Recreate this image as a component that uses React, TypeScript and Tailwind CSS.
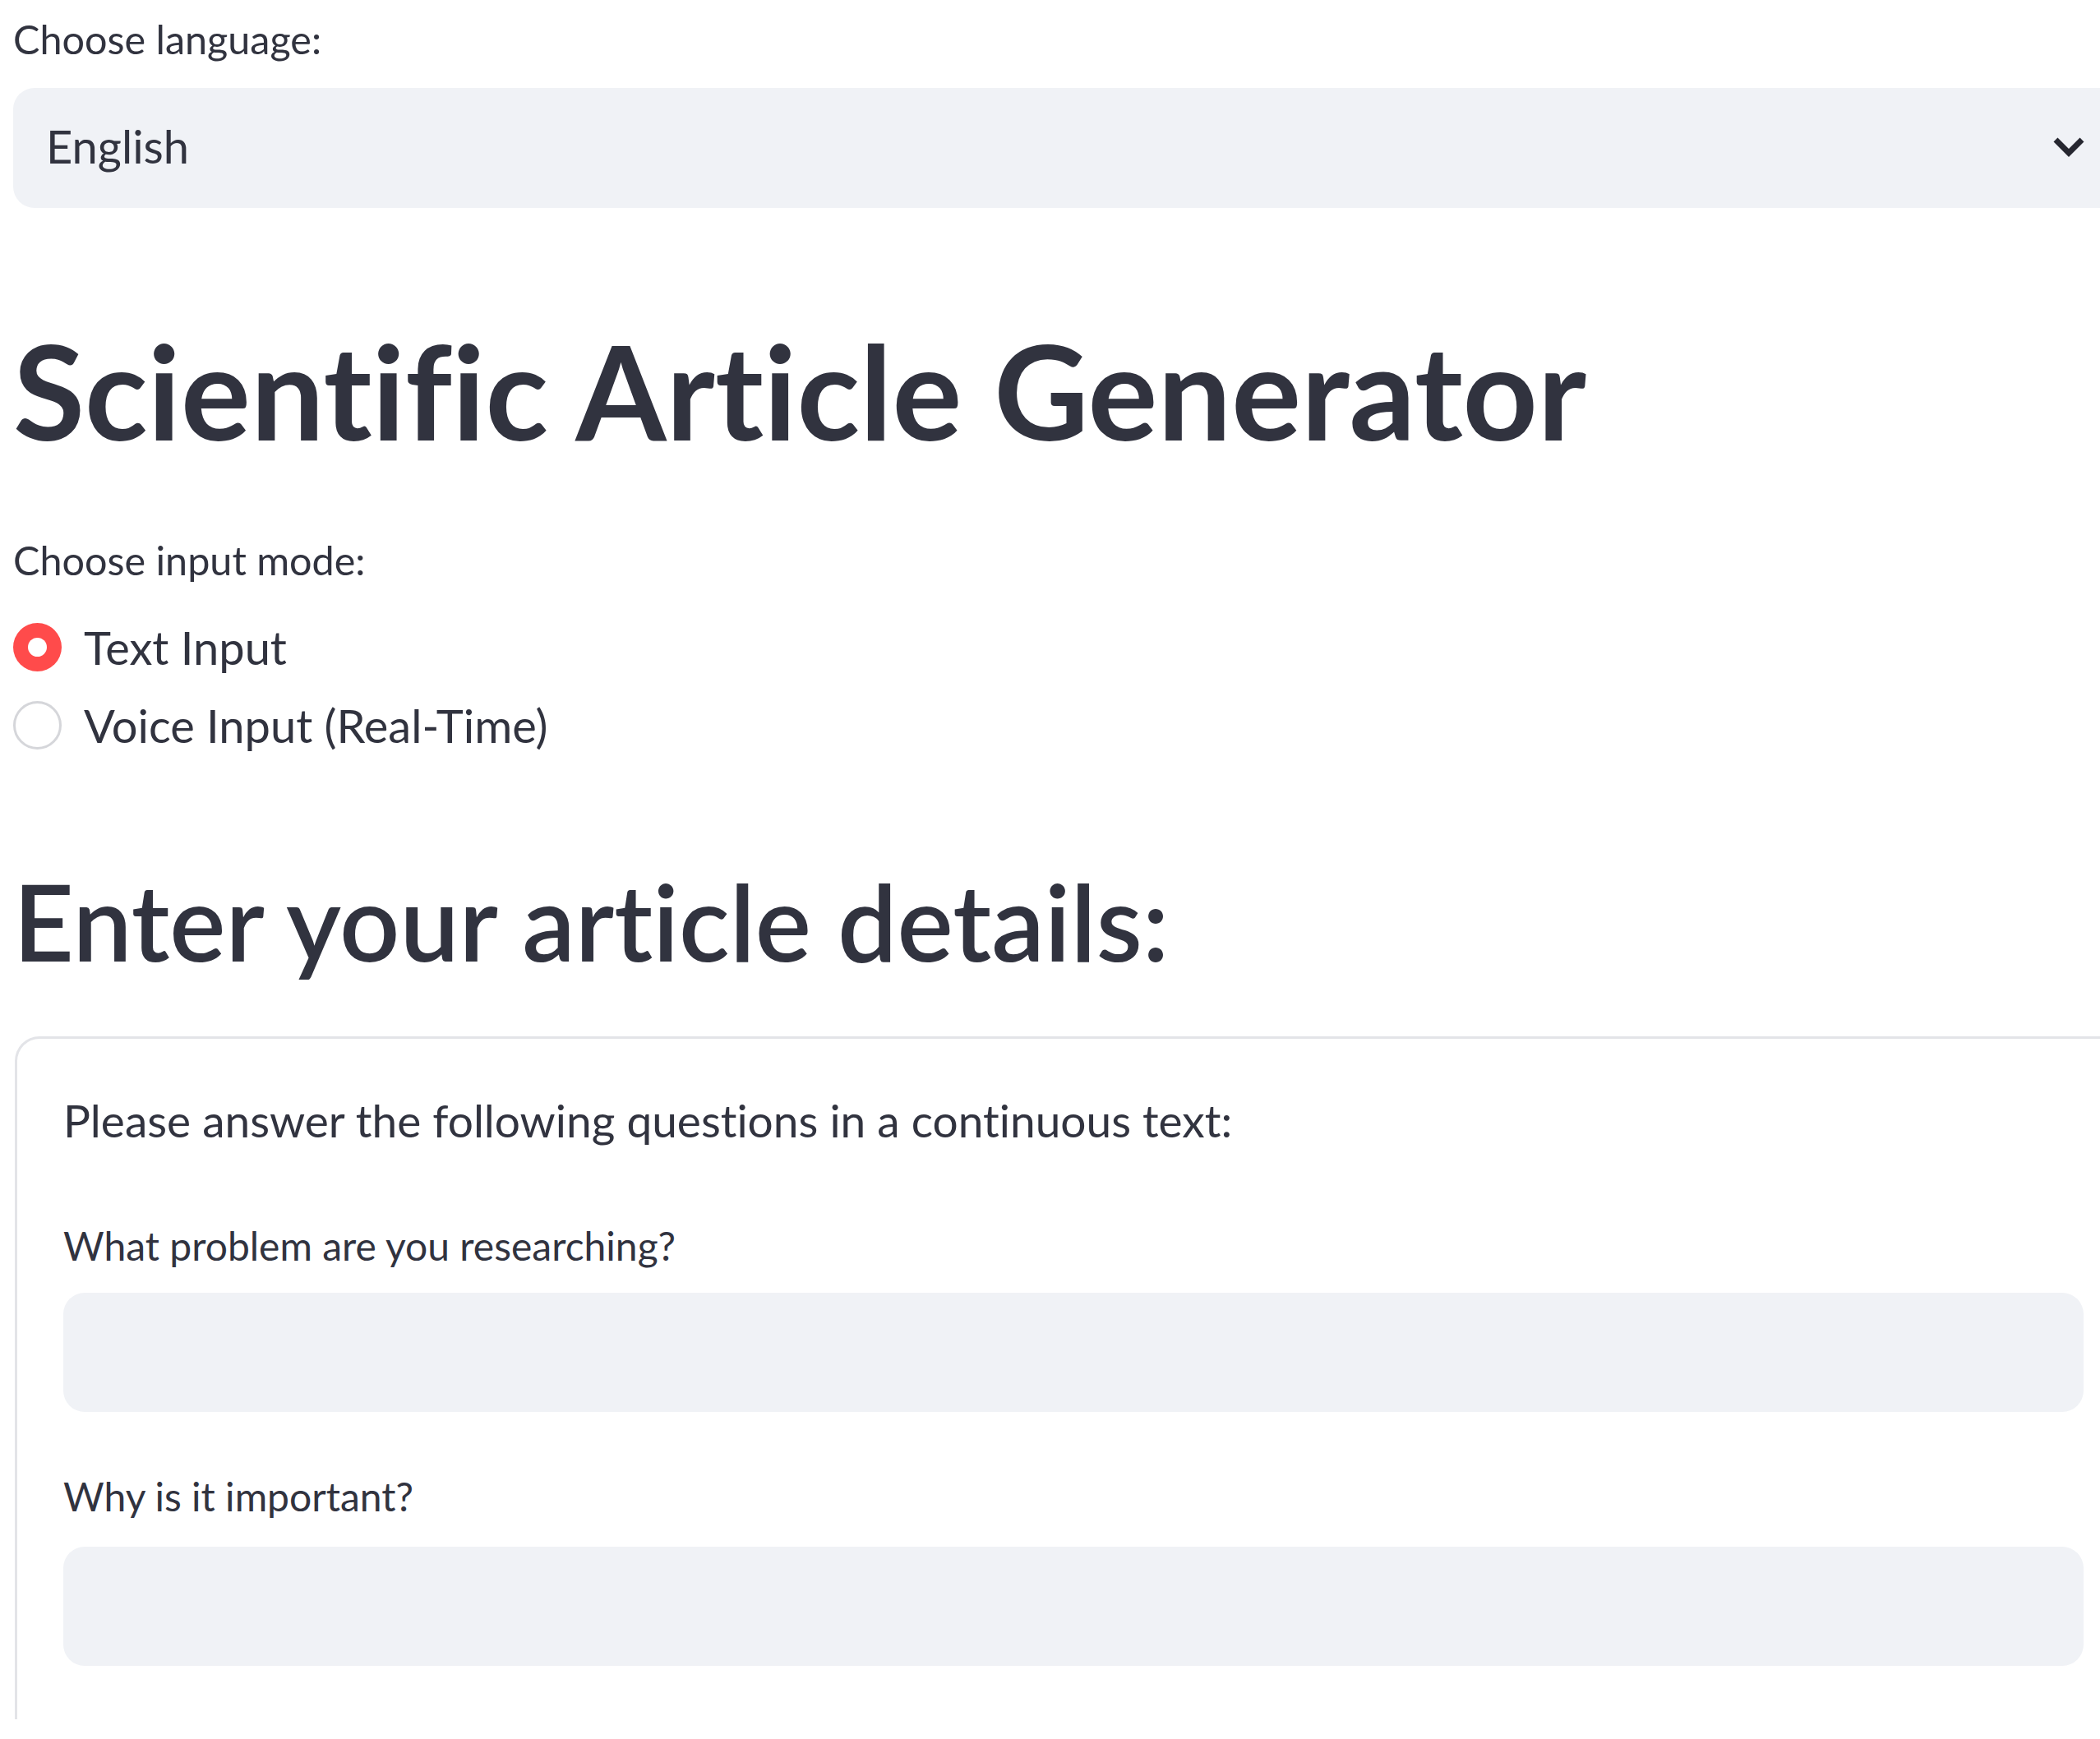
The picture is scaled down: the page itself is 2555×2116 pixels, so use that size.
import React from "react";

const Radio = ({ checked, label }: { checked: boolean; label: string }) => (
  <div className="flex items-center gap-[27px]">
    {checked ? (
      <div className="w-[59px] h-[59px] rounded-full bg-[#ff4b4b] flex items-center justify-center shrink-0">
        <div className="w-[23px] h-[23px] rounded-full bg-white" />
      </div>
    ) : (
      <div className="w-[59px] h-[59px] rounded-full border-[3px] border-[#d5d6da] bg-white shrink-0" />
    )}
    <span className="text-[56px] leading-[1.2]">{label}</span>
  </div>
);

const TextBox = () => (
  <div className="w-full h-[145px] rounded-[26px] bg-[#f0f2f6]" />
);

export default function App() {
  return (
    <div className="w-screen h-[2116px] overflow-hidden bg-white text-[#31333f] font-['Lato',sans-serif] [font-variant-ligatures:none]">
      <div className="pl-[16px] pt-[18px]">
        <label className="block text-[48.5px] leading-[1.2]">Choose language:</label>

        <div className="mt-[31px] w-[2576px] h-[146px] rounded-[26px] bg-[#f0f2f6] flex items-center justify-between pl-[40px] pr-[55px] pb-[5px]">
          <span className="text-[56px] leading-[1.2]">English</span>
          <svg width="40" height="26" viewBox="0 0 40 26" className="mt-[3px]">
            <polyline points="4,4 20,20 36,4" fill="none" stroke="#262730" strokeWidth="7" strokeLinejoin="miter" />
          </svg>
        </div>

        <h1 className="mt-[127px] text-[159px] leading-[1.2] font-bold">Scientific Article Generator</h1>

        <label className="block mt-[81px] text-[48.5px] leading-[1.2]">Choose input mode:</label>

        <div className="mt-[44px] flex flex-col gap-[28px]">
          <Radio checked label="Text Input" />
          <Radio checked={false} label="Voice Input (Real-Time)" />
        </div>

        <h2 className="mt-[126px] text-[128.5px] leading-[1.2] font-semibold">Enter your article details:</h2>

        <div className="mt-[64px] ml-[2px] w-[2576px] border-[3px] border-b-0 border-[#e3e4e8] rounded-t-[30px] px-[56px] pt-[66px] pb-[65px]">
          <p className="text-[55px] leading-[1.2]">Please answer the following questions in a continuous text:</p>

          <label className="block mt-[91px] text-[48px] leading-[1.2]">What problem are you researching?</label>
          <div className="mt-[29px]">
            <TextBox />
          </div>

          <label className="block mt-[74px] text-[48px] leading-[1.2]">Why is it important?</label>
          <div className="mt-[32px]">
            <TextBox />
          </div>
        </div>
      </div>
    </div>
  );
}
